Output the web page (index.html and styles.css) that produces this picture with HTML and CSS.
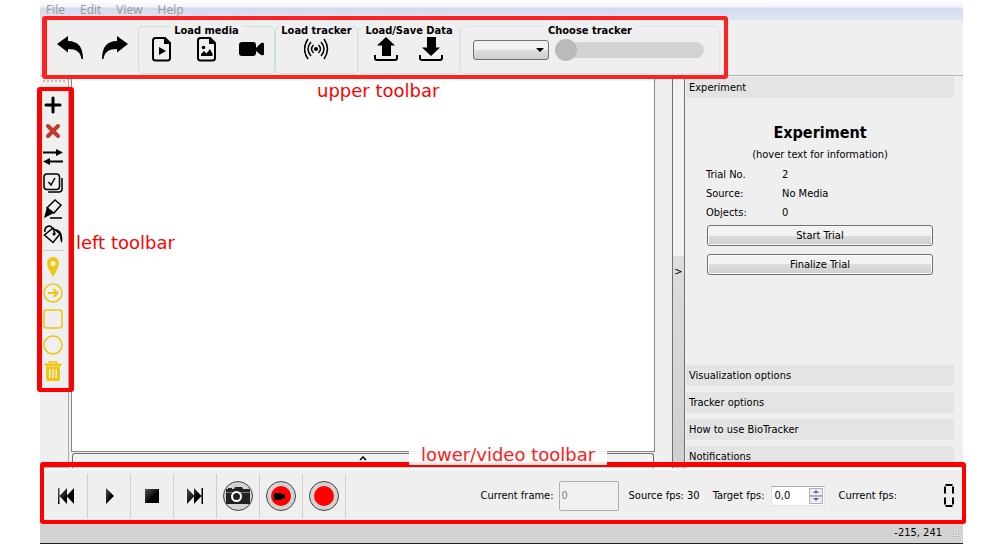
FILE: index.html
```html
<!DOCTYPE html>
<html lang="en">
<head>
<meta charset="utf-8">
<title>BioTracker</title>
<link rel="stylesheet" href="styles.css">
</head>
<body>
<div class="app">
  <nav class="menubar">
    <button>File</button><button>Edit</button><button>View</button><button>Help</button>
  </nav>

  <header class="toolbar">
    <button class="tool" aria-label="Undo"><svg width="28" height="28" viewBox="0 0 28 28"><path d="M0 10 11 2v5c10 0 15 6 15 18h-1.500c-1-7-5-10-13.500-10v3.500z"/></svg></button>
    <button class="tool" aria-label="Redo"><svg width="28" height="28" viewBox="0 0 28 28"><path d="M26 10 15 2v5C5 7 0 13 0 25h1.500c1-7 5-10 13.500-10v3.500z"/></svg></button>
    <section class="group green">
      <h2>Load media</h2>
      <div class="tools">
        <button class="tool" aria-label="Load video"><svg width="22" height="26" viewBox="0 0 22 26"><path class="bold" d="M4.500 2h9.500l5 5V22q0 2.500-2.500 2.500h-12Q2 24.500 2 22V4.500Q2 2 4.500 2z"/><path d="M13 2v6h6zM8 11v8l7-4z"/></svg></button>
        <button class="tool" aria-label="Load pictures"><svg width="22" height="26" viewBox="0 0 22 26"><path class="bold" d="M4.500 2h9.500l5 5V22q0 2.500-2.500 2.500h-12Q2 24.500 2 22V4.500Q2 2 4.500 2z"/><path d="M13 2v6h6zM5 20v-2l3-3 2.500 2.500L14 13l2.500 5v2z"/><circle cx="7.500" cy="11.500" r="1.800"/></svg></button>
        <button class="tool" aria-label="Load camera"><svg width="26" height="24" viewBox="0 0 26 24"><rect x="0" y="5" width="17" height="14" rx="3"/><path d="m17 11 5-5q3-1 3 1v10q0 2-3 1l-5-4z"/></svg></button>
      </div>
    </section>
    <section class="group green tracker">
      <h2>Load tracker</h2>
      <div class="tools">
        <button class="tool" aria-label="Load tracker"><svg width="26" height="24" viewBox="0 0 26 24"><circle cx="12" cy="12" r="2"/><path class="line" d="M9.500 8q-4 4 0 8M14.500 8q4 4 0 8M7 5q-6 7 0 14M17 5q6 7 0 14M4 2q-7 10 0 20M20 2q7 10 0 20"/></svg></button>
      </div>
    </section>
    <section class="group data">
      <h2>Load/Save Data</h2>
      <div class="tools">
        <button class="tool" aria-label="Load data"><svg width="26" height="24" viewBox="0 0 26 24"><path d="m12 0 9 8.500h-4V19H8V8.500H3z"/><path class="bold" d="M1 18v3q0 2 2 2h18q2 0 2-2v-3"/></svg></button>
        <button class="tool" aria-label="Save data"><svg width="26" height="24" viewBox="0 0 26 24"><path d="m12 19 9-8.500h-4V0H8v10.500H3z"/><path class="bold" d="M1 18v3q0 2 2 2h18q2 0 2-2v-3"/></svg></button>
      </div>
    </section>
    <section class="group choose">
      <h2>Choose tracker</h2>
      <div class="choice">
        <span class="combo"><select aria-label="Choose tracker"><option></option></select></span>
        <input class="switch" type="range" min="0" max="1" value="0" aria-label="Tracker active">
      </div>
    </section>
    <div class="frame frame-upper"></div>
    <span class="note note-upper">upper toolbar</span>
  </header>

  <main class="work">
    <aside class="side">
      <div class="grip"></div>
      <button aria-label="Add"><svg width="20" height="20" viewBox="0 0 20 20"><path class="thick" d="M10 3v14M3 10h14"/></svg></button>
      <button aria-label="Remove"><svg width="20" height="20" viewBox="0 0 20 20"><path class="cross" d="m5 5 10 10M15 5 5 15"/></svg></button>
      <button aria-label="Swap"><svg width="20" height="20" viewBox="0 0 20 20"><path class="bold" d="M0 5.500h15M5 14.500h15"/><path d="m13 2 7 3.500L13 9zM7 11l-7 3.500L7 18z"/></svg></button>
      <button aria-label="Select all"><svg width="20" height="20" viewBox="0 0 20 20"><rect class="line" x="1" y="1" width="15.500" height="15.500" rx="3"/><path class="line" d="M19 5v11q0 3-3 3H5M5.500 9l2.500 3 4-7"/></svg></button>
      <button aria-label="Highlight"><svg width="20" height="20" viewBox="0 0 20 20"><path class="line" d="m12 1 6 5-7 8-7-5zM7 19h12"/><path d="m4 8 7 6-4 2-6 3z"/></svg></button>
      <button aria-label="Fill"><svg width="20" height="20" viewBox="0 0 20 20"><path class="line" d="m10 3 7 6-7 8.500L1.500 10zM2 7Q1 2 6 1q4 0 6 8"/><path d="M11 4q10 0 8 14-2-1-2-9z"/><circle cx="11" cy="9" r="1.500"/></svg></button>
      <hr>
      <div class="yellow">
        <button aria-label="Point"><svg width="20" height="20" viewBox="0 0 20 20"><path fill-rule="evenodd" d="M10 0a6 6 0 0 1 6 6q0 4-6 14Q4 10 4 6a6 6 0 0 1 6-6zm0 4a2.500 2.500 0 1 0 0 5 2.500 2.500 0 0 0 0-5z"/></svg></button>
        <button aria-label="Arrow"><svg width="20" height="20" viewBox="0 0 20 20"><circle class="line" cx="10" cy="10" r="9"/><path class="bold" d="M5 10h9M10.500 6l4 4-4 4"/></svg></button>
        <button aria-label="Rectangle"><svg width="20" height="20" viewBox="0 0 20 20"><rect class="line" x="1" y="1" width="18" height="18" rx="2.500"/></svg></button>
        <button aria-label="Ellipse"><svg width="20" height="20" viewBox="0 0 20 20"><circle class="line" cx="10" cy="10" r="9"/></svg></button>
        <button aria-label="Delete"><svg width="20" height="20" viewBox="0 0 20 20"><path class="line" d="M6.500 3V1h7v2"/><path fill-rule="evenodd" d="M1.500 2.500h17v2.500h-17zM3 5.500h14V18q0 2-2 2H5q-2 0-2-2zM6 8v9h1.500V8zm3.250 0v9h1.500V8zm3.250 0v9H14V8z"/></svg></button>
      </div>
      <div class="frame frame-left"></div>
      <span class="note note-left">left toolbar</span>
    </aside>

    <div class="view">
      <div class="canvas"></div>
      <button class="expander" aria-label="Show lower area"><svg width="8" height="5" viewBox="0 0 8 5"><path class="line" d="m1 4 3-3 3 3"/></svg></button>
    </div>
    <button class="splitter">&gt;</button>

    <aside class="panel">
      <button class="section">Experiment</button>
      <div class="experiment">
        <h1>Experiment</h1>
        <p>(hover text for information)</p>
        <dl>
          <dt>Trial No.</dt><dd>2</dd>
          <dt>Source:</dt><dd>No Media</dd>
          <dt>Objects:</dt><dd>0</dd>
        </dl>
        <button class="push">Start Trial</button>
        <button class="push">Finalize Trial</button>
      </div>
      <button class="section">Visualization options</button>
      <button class="section">Tracker options</button>
      <button class="section">How to use BioTracker</button>
      <button class="section">Notifications</button>
    </aside>
  </main>

  <footer class="player">
    <button class="play" aria-label="First frame"><svg width="18" height="16" viewBox="0 0 18 16"><defs><linearGradient id="g" x1="0" y1="0" x2="1" y2="1"><stop offset="0" stop-color="#555"/><stop offset=".5" stop-color="#111"/><stop offset=".5" stop-color="#000"/></linearGradient></defs><path fill="url(#g)" d="M1 0h1.500v16H1zM10 0v16L2.500 8zM17 0v16L9.500 8z"/></svg></button>
    <button class="play" aria-label="Play"><svg width="16" height="16" viewBox="0 0 16 16"><path fill="url(#g)" d="M5 0v16l8-8z"/></svg></button>
    <button class="play" aria-label="Stop"><svg width="16" height="16" viewBox="0 0 16 16"><path fill="url(#g)" d="M1 1h14v14H1z"/></svg></button>
    <button class="play" aria-label="Last frame"><svg width="18" height="16" viewBox="0 0 18 16"><path fill="url(#g)" d="M1 0v16l7.500-8zM8 0v16l7.500-8zM15.500 0H17v16h-1.500z"/></svg></button>
    <button class="play" aria-label="Screenshot"><svg width="30" height="30" viewBox="0 0 30 30"><circle class="disc" cx="15" cy="15" r="14.500"/><path fill="#222" d="M3 8h2V7h4v1h2l1-2h7l1 2h7v15H3z"/><path stroke="#777" d="M3 11.500h24"/><circle cx="13.500" cy="15.500" r="4.500" fill="#222" stroke="#fff" stroke-width="2"/></svg></button>
    <button class="play" aria-label="Record video"><svg width="30" height="30" viewBox="0 0 30 30"><circle class="disc" cx="15" cy="15" r="14.500"/><circle class="red" cx="15" cy="15" r="10"/><path d="M8 12h8v2l3-1v5l-3-1v2H8z"/></svg></button>
    <button class="play" aria-label="Record"><svg width="30" height="30" viewBox="0 0 30 30"><circle class="disc" cx="15" cy="15" r="14.500"/><circle class="red" cx="15" cy="15" r="10"/></svg></button>
    <div class="readouts">
      <label for="frame">Current frame:</label>
      <input id="frame" class="frame-no" value="0" disabled>
      <span class="source">Source fps: 30</span>
      <label for="fps">Target fps:</label>
      <span class="spin"><input id="fps" value="0,0"><span class="steps"><button class="up" aria-label="Increase"></button><button class="down" aria-label="Decrease"></button></span></span>
      <span class="current">Current fps:</span>
      <svg class="lcd" role="img" aria-label="0" width="10" height="24" viewBox="0 0 10 24"><path d="M1.500 1h7M1.500 22h7M1 2.500v7M9 2.500v7M1 13.500v7M9 13.500v7"/></svg>
    </div>
    <div class="frame frame-lower"></div>
    <span class="note note-lower">lower/video toolbar</span>
  </footer>

  <div class="status"><span>-215, 241</span><svg width="10" height="10" viewBox="0 0 10 10"><path fill="#f4f4f4" d="M7 1h1v1H7zM4 4h1v1H4zM7 4h1v1H7zM1 7h1v1H1zM4 7h1v1H4zM7 7h1v1H7z"/><path fill="#aaa" d="M8 2h1v1H8zM5 5h1v1H5zM8 5h1v1H8zM2 8h1v1H2zM5 8h1v1H5zM8 8h1v1H8z"/></svg></div>
</div>
</body>
</html>
```
FILE: styles.css
```css
* { box-sizing: border-box; }
body {
  margin: 0;
  background: #fff;
  color: #000;
  font: 11px/14px "DejaVu Sans Condensed", "DejaVu Sans", sans-serif;
}
button, input, select { font: inherit; color: inherit; margin: 0; padding: 0; }
button { border: 0; background: none; }
h1, h2, p, dl, dd { margin: 0; }
svg { display: block; flex: none; }
.line, .bold, .thick, .cross { fill: none; stroke: #000; stroke-width: 1.5; }
.bold { stroke-width: 2; }
.thick { stroke-width: 3; stroke-linecap: round; }
.cross { stroke: #c0392b; stroke-width: 4; stroke-linecap: round; }

.app {
  display: flex;
  flex-direction: column;
  min-height: 100vh;
  margin: 0 37px 0 40px;
  background: #efefef;
}

.menubar {
  display: flex;
  gap: 15px;
  height: 20px;
  padding: 2px 6px 2px;
  background: linear-gradient(#fff 0, #f1f4fa 7px, #d3daed 8px, #dfe5f4 100%);
  font: 12px/16px "Open Sans", "Noto Sans", sans-serif;
  color: #999;
}

.toolbar {
  position: relative;
  display: flex;
  height: 56px;
  padding: 6px 0 1px 8px;
  border-bottom: 1px solid #b4b4b4;
}
.tool {
  display: flex;
  align-items: center;
  justify-content: center;
  width: 45px;
  height: 24px;
}
.toolbar > .tool { margin-top: 10px; }
.group {
  height: 48px;
  border: 1px solid #e3e3e3;
  border-radius: 5px;
}
.green { border-color: #c9e5cc; }
.group h2 {
  width: fit-content;
  margin: -4px auto 0;
  padding: 0 4px;
  background: #efefef;
  font-size: 11px;
  line-height: 16px;
  white-space: nowrap;
}
.tools { display: flex; justify-content: center; margin-top: -2px; }
.tracker { width: 83px; }
.tracker h2 { padding: 0; }
.data { width: 102px; }
.choose { width: 260px; }
.choice { display: flex; align-items: center; gap: 6px; padding: 0 12px; }
.combo { position: relative; display: flex; }
.combo::after {
  content: "";
  position: absolute;
  right: 5px;
  top: 8px;
  border: 4px solid transparent;
  border-top-color: #000;
  border-bottom: 0;
}
.combo select {
  appearance: none;
  width: 76px;
  height: 20px;
  border: 1px solid #707070;
  border-radius: 3px;
  background: linear-gradient(#f2f2f2 50%, #dddddd 50%, #cfcfcf);
}
.switch {
  appearance: none;
  width: 149px;
  height: 22px;
  background: none;
}
.switch::-webkit-slider-runnable-track { height: 16px; border-radius: 8px; background: #d3d3d3; }
.switch::-webkit-slider-thumb {
  appearance: none;
  width: 22px;
  height: 22px;
  margin-top: -3px;
  border-radius: 50%;
  background: #bababa;
}

.frame {
  position: absolute;
  z-index: 2;
  border: 4px solid #f00;
  border-radius: 3px;
  pointer-events: none;
}
.frame-upper { left: 2px; top: -4px; width: 686px; bottom: -4px; border-color: #ff2020; border-left-width: 5px; }
.frame-left { left: -3px; top: 11px; width: 37px; height: 305px; border-width: 4px 5px; }
.frame-lower { left: 0; top: -8px; right: -3px; bottom: -1px; border-top-width: 5px; }
.note {
  position: absolute;
  z-index: 3;
  font: 18px/20px "DejaVu Sans", sans-serif;
  color: #f00;
  white-space: nowrap;
}
.note-upper { left: 277px; top: 61px; }
.note-left { left: 36px; top: 157px; }
.note-lower {
  left: 369px;
  top: -27px;
  padding: 2px 12px 0;
  background: rgba(255, 255, 255, .9);
  color: #ff2020;
}

.work { flex: 1; display: flex; }
.side {
  position: relative;
  display: flex;
  flex-direction: column;
  width: 29px;
  padding: 4px 3px 0;
  border-right: 1px solid #a8a8a8;
  border-bottom: 1px solid #b4b4b4;
}
.grip { height: 3px; margin-bottom: 9px; border-top: 2px dotted #bbb; }
.side button { display: block; height: 26px; }
.side hr { width: 21px; margin: 2px 0 3px; border: 0; border-top: 1px solid #ccc; }
.yellow svg { fill: #f1c40f; }
.yellow .line, .yellow .bold { stroke: #f1c40f; fill: none; }

.view { flex: 1; display: flex; flex-direction: column; margin-left: 2px; }
.canvas { flex: 1; border: 1px solid #828790; border-top: 0; background: #fff; }
.expander {
  display: flex;
  justify-content: center;
  height: 15px;
  margin: 1px 1px 0;
  padding-top: 2px;
  border: 1px solid #707070;
  border-bottom: 0;
  border-radius: 3px 3px 0 0;
  background: linear-gradient(#f2f2f2 50%, #d5d5d5);
}
.splitter {
  width: 13px;
  margin-left: 17px;
  border: solid #707070;
  border-width: 0 1px;
  background: linear-gradient(#f2f2f2 46%, #dddddd 46%, #cfcfcf);
}

.panel { width: 278px; display: flex; flex-direction: column; gap: 6px; padding: 1px 9px 1px 1px; }
.section { height: 21px; padding-left: 3px; background: #e4e4e4; text-align: left; }
.experiment { flex: 1; display: flex; flex-direction: column; padding: 18px 21px 0; }
.experiment h1 { font-size: 16px; line-height: 22px; text-align: center; }
.experiment p { margin: 4px 0 2px; text-align: center; }
.experiment dl { display: grid; grid-template-columns: 76px 1fr; margin: 1px 0 3px -1px; line-height: 19px; }
.push {
  height: 21px;
  margin-bottom: 8px;
  border: 1px solid #707070;
  border-radius: 3px;
  box-shadow: inset 0 0 0 1px #fafafa;
  background: linear-gradient(#f2f2f2 50%, #dddddd 50%, #cfcfcf);
}

.player {
  position: relative;
  display: flex;
  align-items: center;
  height: 55px;
  padding: 0 9px 2px 5px;
  border-top: 2px solid #fff;
}
.play {
  display: flex;
  align-items: center;
  justify-content: center;
  width: 43px;
  height: 44px;
  border-right: 1px solid #cfcfcf;
}
.disc { fill: #d3d3d3; stroke: #444; }
.red { fill: #f00; }
.readouts { display: flex; align-items: center; margin-left: auto; white-space: nowrap; }
.frame-no {
  width: 60px;
  height: 30px;
  margin: 0 10px 0 5px;
  padding-left: 2px;
  border: 1px solid #afafaf;
  border-radius: 2px;
  background: #f0f0f0;
  color: #838383;
}
.source { margin-right: 13px; }
.spin {
  display: flex;
  width: 54px;
  height: 20px;
  margin: 0 13px 0 7px;
  padding: 1px;
  border: 1px solid #e2e3ea;
  border-top-color: #abadb3;
  background: #fff;
}
.spin input { flex: 1; min-width: 0; padding-left: 1px; border: 0; background: none; }
.steps { display: flex; flex-direction: column; width: 14px; }
.steps button {
  flex: 1;
  display: flex;
  align-items: center;
  justify-content: center;
  border: 1px solid #b0b0b0;
  background: #eee;
}
.steps button::after { content: ""; border: 3px solid transparent; }
.steps .up::after { border-top: 0; border-bottom-color: #5566aa; }
.steps .down::after { border-bottom: 0; border-top-color: #5566aa; }
.current { margin-right: 47px; }
.lcd path { fill: none; stroke: #000; stroke-width: 2; }

.status {
  display: flex;
  align-items: center;
  justify-content: flex-end;
  gap: 8px;
  height: 21px;
  padding-right: 3px;
  border-bottom: 1px solid #222;
  background: #d3d3d3;
}
```
